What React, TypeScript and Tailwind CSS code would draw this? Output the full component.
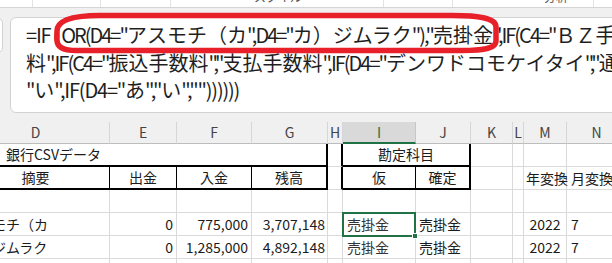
import React from "react"

const JP = "font-['Noto_Sans_CJK_JP',sans-serif]"

// column widths: D..N (D starts off-screen at -38)
const W = { D: 148, E: 67, F: 75, G: 76, H: 15, I: 73, J: 55, K: 42, L: 11, M: 43, N: 60 }

// half-width runs are set tighter, like the formula bar font
function Runs({ text, tight = "tracking-[-1.2px]" }: { text: string; tight?: string }) {
  const parts = text.split(/([\x20-\x7e]+)/).filter(Boolean)
  return (
    <>
      {parts.map((p, i) => /^[\x20-\x7e]+$/.test(p)
        ? <span key={i} className={tight}>{p}</span>
        : <span key={i}>{p}</span>)}
    </>
  )
}

function Cell({ w, className = "", children }: { w: number; className?: string; children?: React.ReactNode }) {
  return (
    <div style={{ width: w }} className={`h-[23px] shrink-0 flex items-center border-r border-b border-[#dadada] overflow-visible whitespace-nowrap text-[14px] text-[#1b1b1b] ${className}`}>
      {children}
    </div>
  )
}

function HeadCell({ w, label, active = false }: { w: number; label: string; active?: boolean }) {
  return (
    <div style={{ width: w }} className={`h-[22px] shrink-0 flex items-center justify-center text-[14px] border-r ${active ? "bg-[#d9d9d9] border-r-[#c6c6c6] border-b-2 border-b-[#217346] text-[#217346]" : "border-r-[#d6d6d6] border-b border-b-[#bdbdbd] text-[#444]"}`}>
      {label}
    </div>
  )
}

function DataRow({ out, inc, bal, tail }: { out: string; inc: string; bal: string; tail: string }) {
  return (
    <>
      <Cell w={W.D} className="pl-[2px]">{tail}</Cell>
      <Cell w={W.E} className="justify-end pr-[3px]">{out}</Cell>
      <Cell w={W.F} className="justify-end pr-[3px]">{inc}</Cell>
      <Cell w={W.G} className="justify-end pr-[2px]">{bal}</Cell>
      <Cell w={W.H} />
      <Cell w={W.I} className="pl-[4px] text-[12.5px] text-[#333]">売掛金</Cell>
      <Cell w={W.J} className="pl-[3px]">売掛金</Cell>
      <Cell w={W.K} />
      <Cell w={W.L} />
      <Cell w={W.M} className="justify-center">2022</Cell>
      <Cell w={W.N} className="pl-[4px]">7</Cell>
    </>
  )
}

export default function App() {
  return (
    <div className={`relative w-[612px] h-[263px] overflow-hidden bg-white ${JP}`}>
      {/* ribbon bottom edge */}
      <div className="h-[8px] flex border-b border-[#d4d4d4] overflow-hidden text-[12px] leading-none text-[#555]">
        <div className="w-[33px] shrink-0 border-r border-[#e2e2e2]" />
        <div className="w-[68px] shrink-0 border-r border-[#e2e2e2]" />
        <div className="w-[70px] shrink-0 border-r border-[#e2e2e2]" />
        <div className="w-[213px] shrink-0 border-r border-[#e2e2e2] pl-[83px]"><span className="block -mt-[9px]">スタイル</span></div>
        <div className="w-[69px] shrink-0 border-r border-[#e2e2e2]" />
        <div className="w-[141px] shrink-0 border-r border-[#e2e2e2] pl-[91px]"><span className="block -mt-[9px]">分析</span></div>
        <div className="flex-1" />
      </div>

      {/* formula bar */}
      <div className="h-[114px] bg-[#f0f0f0] flex items-start pt-[9px] overflow-hidden">
        <div className="w-[40px] h-[35px] -ml-[37px] mt-[1px] shrink-0 bg-white border border-[#d2d2d2] rounded-[5px]" />
        <div className="ml-[7px] w-[640px] h-[96px] shrink-0 bg-white border border-[#d2d2d2] rounded-[6px] pl-[15px] pt-[3px] text-[20px] leading-[27.5px] text-[#1f1f1f] whitespace-nowrap overflow-hidden">
          <div>
            <Runs text="=IF" /><span className="px-[2px]">(</span><Runs tight="tracking-[-2px]" text={'OR(D4="アスモチ（カ",D4="カ）ジムラク"),"売掛金",IF(C4="ＢＺ手数'} />
          </div>
          <div><Runs tight="tracking-[-2px]" text={'料",IF(C4="振込手数料","支払手数料",IF(D4="デンワドコモケイタイ","通信'} /></div>
          <div><Runs text={'"い",IF(D4="あ","い",""))))))'} /></div>
        </div>
      </div>

      {/* red annotation */}
      <svg className="absolute left-0 top-0 pointer-events-none" width="612" height="60" viewBox="0 0 612 60">
        <path d="M100 15.5 L452 15.5 C480 15.5 496 18 496 27 L496 41 C496 48 486 50.5 462 50.5 L76 50.5 C63 50.5 57 47 57 40 L57 31 C57 21 70 15.5 100 15.5 Z" fill="none" stroke="#e8202a" strokeWidth="5.5" />
      </svg>

      {/* sheet */}
      <div className="-ml-[38px] w-[665px]">
        <div className="flex bg-[#f0f0f0]">
          <HeadCell w={W.D} label="D" />
          <HeadCell w={W.E} label="E" />
          <HeadCell w={W.F} label="F" />
          <HeadCell w={W.G} label="G" />
          <HeadCell w={W.H} label="H" />
          <HeadCell w={W.I} label="I" active />
          <HeadCell w={W.J} label="J" />
          <HeadCell w={W.K} label="K" />
          <HeadCell w={W.L} label="L" />
          <HeadCell w={W.M} label="M" />
          <HeadCell w={W.N} label="N" />
        </div>

        {/* row: title */}
        <div className="flex">
          <Cell w={W.D + W.E + W.F + W.G} className="pl-[44px] border-r-2 border-r-black border-b-2 border-b-black">銀行CSVデータ</Cell>
          <Cell w={W.H} className="border-r-2 border-r-black" />
          <Cell w={W.I + W.J} className="justify-center text-[13.5px] border-r-2 border-r-black border-b-2 border-b-black">勘定科目</Cell>
          <Cell w={W.K} />
          <Cell w={W.L} />
          <Cell w={W.M} />
          <Cell w={W.N} />
        </div>

        {/* row: headers */}
        <div className="flex">
          <Cell w={W.D} className="justify-center text-[13.5px] border-r-black border-b-2 border-b-black">摘要</Cell>
          <Cell w={W.E} className="justify-center text-[13.5px] border-r-black border-b-2 border-b-black">出金</Cell>
          <Cell w={W.F} className="justify-center text-[13.5px] border-r-black border-b-2 border-b-black">入金</Cell>
          <Cell w={W.G} className="justify-center text-[13.5px] border-r-2 border-r-black border-b-2 border-b-black">残高</Cell>
          <Cell w={W.H} className="border-r-2 border-r-black" />
          <Cell w={W.I} className="justify-center text-[13.5px] border-r-black border-b-2 border-b-black">仮</Cell>
          <Cell w={W.J} className="justify-center text-[13.5px] border-r-2 border-r-black border-b-2 border-b-black">確定</Cell>
          <Cell w={W.K} />
          <Cell w={W.L} />
          <Cell w={W.M} className="pl-[2px] text-[13.5px]">年変換</Cell>
          <Cell w={W.N} className="pl-[4px] text-[13.5px]">月変換</Cell>
        </div>

        {/* empty row */}
        <div className="flex">
          {Object.values(W).map((w, i) => <Cell key={i} w={w} />)}
        </div>

        {/* data rows */}
        <div className="flex relative">
          <DataRow out="0" inc="775,000" bal="3,707,148" tail="アスモチ（カ" />
          {/* active cell I4 */}
          <div className="absolute left-[380px] top-[-1px] w-[74px] h-[25px] border-2 border-[#217346] pointer-events-none">
            <div className="absolute -right-[4px] -bottom-[4px] w-[6px] h-[6px] bg-[#217346] border border-white" />
          </div>
        </div>
        <div className="flex">
          <DataRow out="0" inc="1,285,000" bal="4,892,148" tail="カ）ジムラク" />
        </div>
        <div className="flex">
          {Object.values(W).map((w, i) => <Cell key={i} w={w} />)}
        </div>
      </div>
    </div>
  )
}
